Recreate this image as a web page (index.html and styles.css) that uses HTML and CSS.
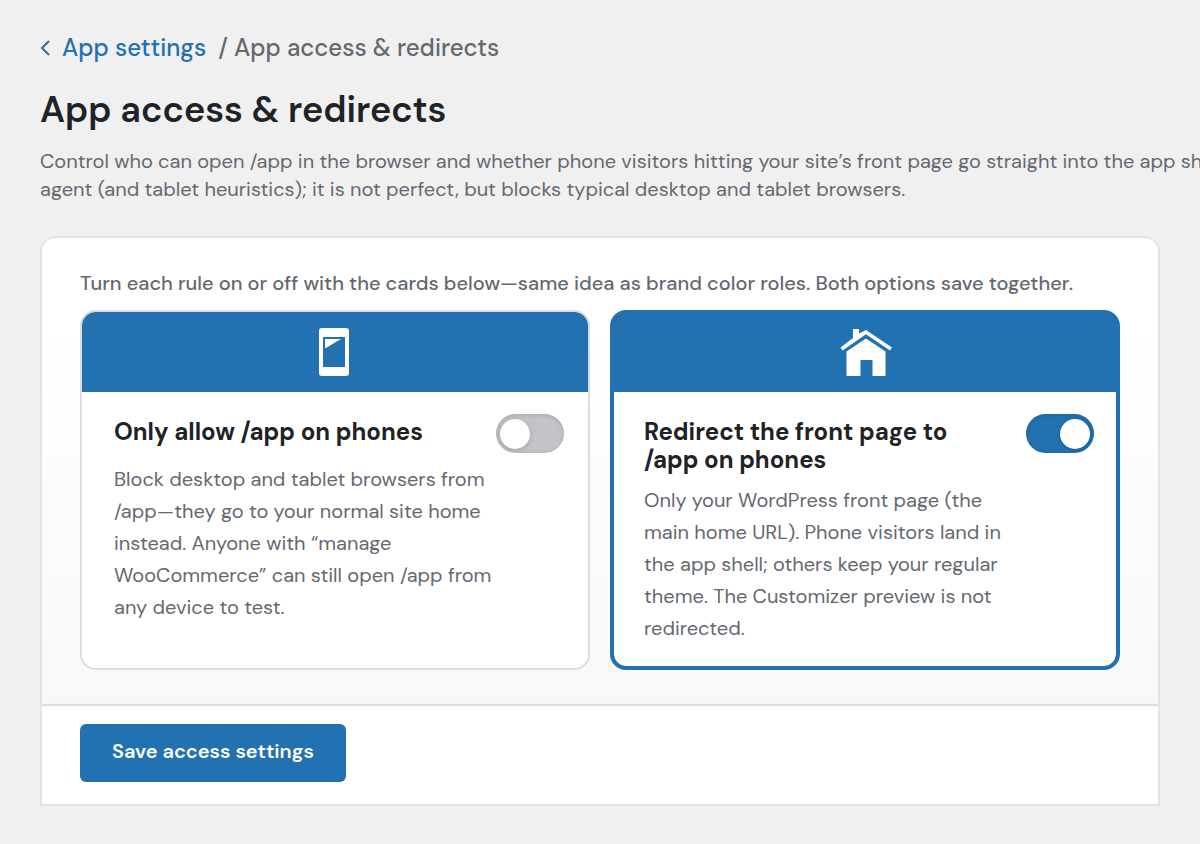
FILE: index.html
```
<!DOCTYPE html>
<html lang="en">
<head>
    <meta charset="UTF-8">
    <meta name="viewport" content="width=device-width, initial-scale=1.0">
    <title>App access &amp; redirects</title>
    <link rel="stylesheet" href="styles.css">
</head>
<body>
    <main class="page">
        <nav class="breadcrumb" aria-label="Breadcrumb">
            <a href="#settings" class="back-link">
                <svg class="chevron" viewBox="0 0 10 16" aria-hidden="true"><path d="M9 1 2 8l7 7"/></svg>
                App settings
            </a>
            <span>/ App access &amp; redirects</span>
        </nav>

        <h1>App access &amp; redirects</h1>
        <p class="intro">Control who can open /app in the browser and whether phone visitors hitting your site’s front page go straight into the app shell.<br>agent (and tablet heuristics); it is not perfect, but blocks typical desktop and tablet browsers.</p>

        <form class="panel">
            <div class="panel-body">
                <p class="panel-hint">Turn each rule on or off with the cards below—same idea as brand color roles. Both options save together.</p>

                <div class="cards">
                    <section class="card">
                        <div class="card-banner">
                            <svg class="icon-phone" viewBox="0 0 32 48" aria-hidden="true">
                                <path fill-rule="evenodd" d="M3 0h24a3 3 0 0 1 3 3v42a3 3 0 0 1-3 3H3a3 3 0 0 1-3-3V3a3 3 0 0 1 3-3zM4 9v30h22V9z"/>
                                <path d="M6 11h16L6 20.500z"/>
                            </svg>
                        </div>
                        <div class="card-body">
                            <div class="card-head">
                                <label class="card-title" for="phones_only">Only allow /app on phones</label>
                                <input type="checkbox" role="switch" class="toggle" id="phones_only" name="phones_only">
                            </div>
                            <p class="card-text">Block desktop and tablet browsers from /app—they go to your normal site home instead. Anyone with “manage WooCommerce” can still open /app from any device to test.</p>
                        </div>
                    </section>

                    <section class="card card-active">
                        <div class="card-banner">
                            <svg class="icon-home" viewBox="-2 0 54 48" aria-hidden="true">
                                <path d="M13 9V0h6v4.500L26 1l26 17.500-2 3L26 5.300 2.500 21.500l-2-3z"/>
                                <path d="M26 9.500 45.500 22.500V47h-13V31h-12v16h-14V22.500z"/>
                            </svg>
                        </div>
                        <div class="card-body">
                            <div class="card-head">
                                <label class="card-title" for="redirect_front">Redirect the front page to /app on phones</label>
                                <input type="checkbox" role="switch" class="toggle" id="redirect_front" name="redirect_front" checked>
                            </div>
                            <p class="card-text">Only your WordPress front page (the main home URL). Phone visitors land in the app shell; others keep your regular theme. The Customizer preview is not redirected.</p>
                        </div>
                    </section>
                </div>
            </div>

            <div class="panel-footer">
                <button type="submit" class="save-button">Save access settings</button>
            </div>
        </form>
    </main>
</body>
</html>
```

FILE: styles.css
```
* {
    box-sizing: border-box;
}
body {
    margin: 0;
    background: #f0f0f0;
    color: #1d2327;
    font-family: "DM Sans", Inter, sans-serif;
    font-size: 20px;
    overflow-x: hidden;
}
.page {
    padding: 32px 40px 38px;
}
.breadcrumb {
    display: flex;
    gap: 12px;
    font-size: 24px;
    font-weight: 500;
    line-height: 32px;
    color: #646970;
}
.back-link {
    display: flex;
    align-items: center;
    gap: 12px;
    color: #2271b1;
    text-decoration: none;
}
.chevron {
    width: 10px;
    height: 16px;
    fill: none;
    stroke: currentColor;
    stroke-width: 2;
}
h1 {
    margin: 22px 0 13px;
    font-size: 36px;
    font-weight: 600;
    line-height: 48px;
}
.intro {
    margin: 0 0 33px;
    line-height: 28px;
    color: #646970;
    white-space: nowrap;
}
.panel {
    background: white;
    border: 2px solid #e3e3e4;
    border-radius: 16px 16px 0 0;
}
.panel-body {
    padding: 30px 38px 34px;
    background: linear-gradient(#fff 20%, #f8f8f8);
    border-bottom: 2px solid #dcdcde;
    border-radius: 14px 14px 0 0;
}
.panel-hint {
    margin: 0 0 12px;
    font-weight: 500;
    line-height: 30px;
    color: #646970;
}
.cards {
    display: grid;
    grid-template-columns: 1fr 1fr;
    gap: 20px;
}
.card {
    display: flex;
    flex-direction: column;
    overflow: hidden;
    background: white;
    border: 2px solid #dcdcde;
    border-radius: 16px;
}
.card-banner {
    display: flex;
    align-items: center;
    justify-content: center;
    height: 80px;
    background: #2271b1;
}
.card-banner svg {
    height: 48px;
    fill: white;
}
.icon-phone {
    width: 32px;
}
.icon-home {
    width: 54px;
}
.card-body {
    flex: 1;
    padding: 22px 24px 24px 32px;
    background: white;
}
.card-active {
    background: #2271b1;
    border: 4px solid #2271b1;
}
.card-active .card-banner {
    height: 78px;
}
.card-active .card-body {
    padding: 22px 22px 22px 30px;
    border-radius: 0 0 12px 12px;
}
.card-head {
    display: flex;
    align-items: flex-start;
    justify-content: space-between;
    gap: 20px;
    margin-bottom: 10px;
}
.card-title {
    max-width: 330px;
    padding-top: 4px;
    font-size: 24px;
    font-weight: 700;
    line-height: 28px;
}
.card-text {
    max-width: 384px;
    margin: 0;
    line-height: 32px;
    color: #646970;
}
.toggle {
    appearance: none;
    display: flex;
    flex: none;
    align-items: center;
    width: 68px;
    height: 39px;
    margin: 0;
    padding: 0 4px;
    background: #c3c4c7;
    border-radius: 20px;
    box-shadow: inset 0 1px 4px rgba(0, 0, 0, 0.15);
    cursor: pointer;
}
.toggle::before {
    content: "";
    width: 30px;
    height: 30px;
    background: white;
    border-radius: 50%;
    box-shadow: 0 1px 4px rgba(0, 0, 0, 0.2);
}
.toggle:checked {
    justify-content: flex-end;
    background: #2271b1;
}
.panel-footer {
    padding: 18px 38px 22px;
}
.save-button {
    height: 58px;
    padding: 0 32px 4px;
    background: #2271b1;
    border: none;
    border-radius: 6px;
    color: white;
    font-family: inherit;
    font-size: 20px;
    font-weight: 600;
    cursor: pointer;
}

@media (max-width: 800px) {
    .intro {
        white-space: normal;
    }
    .cards {
        grid-template-columns: 1fr;
    }
}
```
